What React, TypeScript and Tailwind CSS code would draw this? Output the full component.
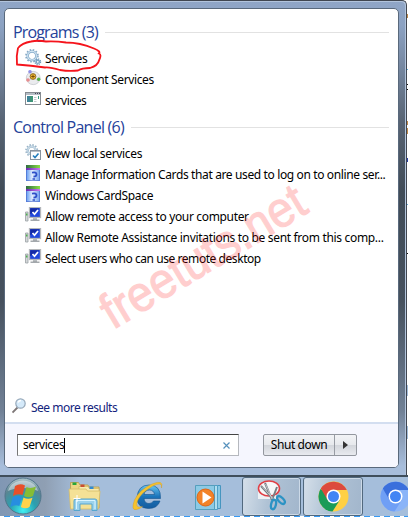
import React from "react";

const GearIcon = () => (
  <svg width="17" height="17" viewBox="0 0 17 17">
    <circle cx="7" cy="6.8" r="6" fill="none" stroke="#85a9c6" strokeWidth="1.6" strokeDasharray="1.6 1.54" />
    <circle cx="7" cy="6.8" r="4.3" fill="none" stroke="#84a9c8" strokeWidth="2.4" />
    <circle cx="7" cy="6.8" r="4.4" fill="none" stroke="#cfe4f2" strokeWidth="1.2" />
    <circle cx="12.8" cy="12.8" r="2.8" fill="none" stroke="#6f9abb" strokeWidth="1.3" strokeDasharray="1.2 1" />
    <circle cx="12.8" cy="12.8" r="1.6" fill="#fff" stroke="#7aa5c5" strokeWidth="1.4" />
  </svg>
);

const ComponentIcon = () => (
  <svg width="17" height="17" viewBox="0 0 17 17">
    <ellipse cx="8.2" cy="8" rx="6.9" ry="6.6" fill="#eaebee" stroke="#cfd2d6" />
    <path d="M3.500 11 8 7l5 4" fill="none" stroke="#d3d5da" />
    <circle cx="8" cy="6.500" r="2.900" fill="#efb92f" stroke="#7b5b1c" strokeWidth=".8" />
    <path d="M6.200 6.500h3.600M8 4.700v3.600" stroke="#70460c" strokeWidth=".9" />
    <circle cx="5" cy="1.800" r="1.800" fill="#8f8fe4" />
    <circle cx="3" cy="10" r="1.800" fill="#e88c8e" />
    <circle cx="13.700" cy="9.200" r="1.700" fill="#55b04a" />
  </svg>
);

const WindowIcon = () => (
  <svg width="17" height="17" viewBox="0 0 17 17">
    <rect x=".5" y="1.5" width="15" height="12" fill="#fff" stroke="#858b91" />
    <path d="M1 3h14" stroke="#b5bdc5" strokeWidth="2" />
    <path d="M10 2.500h1M12 2.500h1M14 2.500h1" stroke="#445" />
    <rect x="2" y="5" width="6" height="6" fill="#3f9478" />
    <path d="M2 5h3v6H2z" fill="#3f78b0" opacity=".55" />
    <path d="M9 6.500h2.500M9 8.500h2.500M9 10.500h2.500" stroke="#c3c9ce" />
    <path d="M13.500 5v3" stroke="#3a9a81" />
  </svg>
);

const LocalServicesIcon = () => (
  <svg width="17" height="17" viewBox="0 0 17 17">
    <circle cx="6.700" cy="6.500" r="5.700" fill="none" stroke="#9ab4c7" strokeWidth="1.600" strokeDasharray="1.500 1.480" />
    <circle cx="6.700" cy="6.500" r="3.900" fill="none" stroke="#a4bfd3" strokeWidth="2.400" />
    <circle cx="6.700" cy="6.500" r="4" fill="none" stroke="#d3e2ec" strokeWidth="1" />
    <rect x="5.500" y="6.500" width="10" height="9" fill="#fbfdfe" stroke="#87939e" />
    <path d="M6 7.500h9" stroke="#b4bdc6" />
    <path d="m8 11.500 2 2 3.500-4" fill="none" stroke="#227dbc" strokeWidth="1.600" />
  </svg>
);

const CardIcon = () => (
  <svg width="17" height="17" viewBox="0 0 17 17">
    <defs>
      <linearGradient id="card" x2="1">
        <stop stopColor="#5c97f2" />
        <stop offset=".45" stopColor="#e4effe" />
        <stop offset="1" stopColor="#6c9cf0" />
      </linearGradient>
      <linearGradient id="cardTop" x2="1">
        <stop stopColor="#2f6b41" />
        <stop offset="1" stopColor="#8be044" />
      </linearGradient>
      <linearGradient id="cardBand" x2="1">
        <stop stopColor="#6a2bb0" />
        <stop offset="1" stopColor="#c97bec" />
      </linearGradient>
    </defs>
    <rect x="1" y="0" width="14" height="16" fill="url(#card)" />
    <path d="M1 0h14v3H1z" fill="url(#cardTop)" />
    <path d="M1 3h14v2H1z" fill="url(#cardBand)" />
    <path d="M7 7.700q4.500-1 4.500 1.800 0 2-3 2.200" fill="none" stroke="#2f50c8" strokeWidth="1.800" />
    <path d="M7.500 14h2.500" stroke="#2f50c8" strokeWidth="1.500" />
    <path d="M1.500 5v11M14.500 5v11M1 15.500h14" stroke="#4a68c8" opacity=".6" />
  </svg>
);

const RemoteIcon = () => (
  <svg width="17" height="17" viewBox="0 0 17 17">
    <path d="M.5 5h2.500v9H.5z" fill="#d4d7d9" stroke="#9ba1a5" strokeWidth=".8" />
    <path d="M1 7.500h1.500" stroke="#4fb04f" strokeWidth="2" />
    <rect x="4.500" y=".5" width="11" height="10" fill="#2148dc" stroke="#b4b7bb" strokeWidth="1.300" />
    <path d="M5.200 1.200h9.600l-9.600 6z" fill="#142aa6" />
    <path d="M8 11.200h4V12.500h2.500V14h-9v-1.500H8z" fill="#a3a8ac" />
    <path d="m7.500 5 2 2.300L13 3" fill="none" stroke="#fff" strokeWidth="1.700" />
  </svg>
);

type Item = { icon: React.ReactNode; label: string; tracking: string };

const programs: Item[] = [
  { icon: <GearIcon />, label: "Services", tracking: "tracking-[-0.45px]" },
  { icon: <ComponentIcon />, label: "Component Services", tracking: "tracking-[-0.37px]" },
  { icon: <WindowIcon />, label: "services", tracking: "tracking-[-0.45px]" },
];

const controls: Item[] = [
  { icon: <LocalServicesIcon />, label: "View local services", tracking: "tracking-[-0.33px]" },
  { icon: <CardIcon />, label: "Manage Information Cards that are used to log on to online ser...", tracking: "tracking-[-0.37px]" },
  { icon: <CardIcon />, label: "Windows CardSpace", tracking: "tracking-[-0.35px]" },
  { icon: <RemoteIcon />, label: "Allow remote access to your computer", tracking: "tracking-[-0.34px]" },
  { icon: <RemoteIcon />, label: "Allow Remote Assistance invitations to be sent from this comp...", tracking: "tracking-[-0.32px]" },
  { icon: <RemoteIcon />, label: "Select users who can use remote desktop", tracking: "tracking-[-0.44px]" },
];

function Section({ title, tracking, items }: { title: string; tracking: string; items: Item[] }) {
  return (
    <section>
      <div className="flex h-[26px] items-center gap-[7px] pl-[8px] pr-[9px]">
        <h2 className={`whitespace-nowrap font-['Open_Sans','Noto_Sans',sans-serif] text-[16px] leading-[22px] text-[#25429a] ${tracking}`}>{title}</h2>
        <div className="h-px flex-1 bg-[#e2e2e2]" />
      </div>
      <ul className="pl-[20px] pt-[2px]">
        {items.map((it) => (
          <li key={it.label} className="flex h-[21px] items-center gap-[3px]">
            <span className="h-[17px] w-[17px] shrink-0">{it.icon}</span>
            <span className={`whitespace-nowrap pt-[3px] text-[12px] leading-[18px] text-black ${it.tracking}`}>{it.label}</span>
          </li>
        ))}
      </ul>
    </section>
  );
}

const StartOrb = () => (
  <svg width="38" height="38" viewBox="0 0 38 38">
    <defs>
      <radialGradient id="orb" cx=".5" cy=".9" r=".9">
        <stop stopColor="#3ff0f2" />
        <stop offset=".4" stopColor="#2aa0b0" />
        <stop offset=".75" stopColor="#5b8592" />
        <stop offset="1" stopColor="#b5cad0" />
      </radialGradient>
    </defs>
    <circle cx="19" cy="19" r="18" fill="url(#orb)" stroke="#51758b" />
    <path d="M4 14C8 0 30 0 34 14c-8-4-22-4-30 0" fill="#eef4f5" opacity=".5" />
    <path d="M11 9q5-3 10-.5L18.500 18q-5-2-9.500 1z" fill="#e8502a" />
    <path d="M22.500 10q4.500 2 9.500-.5L29 19q-4.500 2.500-9 0z" fill="#86bd35" />
    <path d="M8.500 20.500q4.500-3 9.500-.5l-2.700 9q-4.300-2-9 1z" fill="#278ee0" />
    <path d="M19.500 20.500q4.500 2.500 9 .2L25.500 30q-4 2.500-8.700 0z" fill="#ffd34b" />
  </svg>
);

const FolderIcon = () => (
  <svg width="34" height="32" viewBox="0 0 34 32">
    <path d="M2.500 3V1.500h8L12 4h8l1 2h10v21H3z" fill="#ecd684" stroke="#b99b46" strokeWidth=".8" />
    <path d="M11 5.500h9l1.500 2H31V24H11z" fill="#f7e9ae" stroke="#d0b45e" strokeWidth=".7" />
    <path d="M4.500 1.500h4v2.500h-4z" fill="#26a639" />
    <path d="M12.500 3.500h4V6h-4z" fill="#c94e30" />
    <path d="M21.500 5.500h4V8h-4z" fill="#338bd3" />
    <path d="M1 8h17l1.500 2H32l-1.500 18H2.500z" fill="#f4e196" stroke="#d6bc68" strokeWidth=".8" />
    <path d="M6 29.500V20q0-2 2-2h19q2 0 2 2v9.500h-5V23H12v6.500z" fill="#9bd2ec" stroke="#56a5ce" />
    <path d="M8 19.500h19M8.500 20v8M27 20v8" stroke="#d9f4ff" />
    <path d="M9 14v7M5.500 17.500h7" stroke="#fff" strokeWidth="1" />
  </svg>
);

const ExplorerIcon = () => (
  <svg width="32" height="32" viewBox="0 0 32 32">
    <defs>
      <linearGradient id="ie" x2="0" y2="1">
        <stop stopColor="#69c8f3" />
        <stop offset=".5" stopColor="#1a73b9" />
        <stop offset="1" stopColor="#145c9f" />
      </linearGradient>
    </defs>
    <path d="M28.500 18.500H12q.5 5 5 5 3 0 4.500-2.500h6.500Q25.500 28.500 16.500 28.500 5 28 5 17.500 6 5 17 5q12 0 11.500 13.500zM12 14.500h10.500q-.8-4.500-5-4.500-4.700 0-5.500 4.500z" fill="url(#ie)" stroke="#12518b" strokeWidth=".6" />
    <path d="M29.500 8Q32-1 20 4 7 10 2.500 20q-4 11 2 9.500 3-.5 6-3-4.500 1.500-5.500-.5-1.500-5 6-13Q22 3.500 28 4q2 .5 1.500 4z" fill="#f6c22e" stroke="#d39b19" strokeWidth=".4" />
  </svg>
);

const MediaIcon = () => (
  <svg width="28" height="28" viewBox="0 0 28 28">
    <path d="M6 1.500h19.500v23H6z" fill="#88c8e5" stroke="#4695bf" />
    <path d="M4 1.500h18.500v24H4z" fill="#b0def0" stroke="#519fc5" />
    <path d="M.5 1.500h19v24H.5z" fill="#8ccae5" stroke="#559fbd" />
    <circle cx="10.500" cy="13.500" r="8.500" fill="#f38328" stroke="#e26412" />
    <path d="m7.500 7.500 9 6-9 6z" fill="#fff" />
  </svg>
);

const SnipIcon = () => (
  <svg width="34" height="34" viewBox="0 0 34 34">
    <path d="M3 7h18v13H3z" fill="#eef1f4" />
    <ellipse cx="14" cy="9.500" rx="10.500" ry="7.500" fill="#f7f8f9" stroke="#e13f45" strokeWidth="1.600" />
    <path d="m6 7 13 14M10 4l7 17M22 8l-5 13" stroke="#777e84" strokeWidth="2" />
    <path d="m7 7.500 12 13M10.500 5 17 20" stroke="#dce0e3" strokeWidth=".7" />
    <ellipse cx="18.500" cy="25.500" rx="2.400" ry="4.800" transform="rotate(12 18.500 25.500)" fill="none" stroke="#2c93c4" strokeWidth="2.300" />
    <ellipse cx="26" cy="21" rx="2.400" ry="4.800" transform="rotate(-45 26 21)" fill="none" stroke="#2c93c4" strokeWidth="2.300" />
  </svg>
);

function ChromeIcon({ top, left, right }: { top: string; left: string; right: string }) {
  return (
    <svg width="31" height="31" viewBox="0 0 31 31" className="shrink-0">
      <circle cx="15.500" cy="15.500" r="15" fill={right} />
      <path d="M15.500 15.500 2.500 8A15 15 0 0 0 14.500 30.500l7-11z" fill={left} />
      <path d="M2.800 7.500A15 15 0 0 1 28.800 9H15.500L9.500 19z" fill={top} />
      <circle cx="15.500" cy="15.500" r="7" fill="#fff" />
      <circle cx="15.500" cy="15.500" r="5.500" fill="#4285f4" />
    </svg>
  );
}

export default function App() {
  return (
    <div className="relative h-[517px] w-[408px] overflow-hidden bg-white font-['Noto_Sans','Open_Sans',sans-serif]">
      <div className="h-[475px] w-[407px] rounded-tr-[5px] border-r border-t border-[#414751] bg-[linear-gradient(to_bottom,#90a6c7_0px,#8ca2c2_25px,#586474_120px,#414c58_190px,#46515e_300px,#718196_410px,#a7bddb_465px)] pl-[4px] pr-[8px] pt-[7px] shadow-[inset_-1px_1px_#b2c4dc]">
        <div className="flex h-[460px] w-[395px] flex-col overflow-hidden rounded-[5px] border border-[#59697c] bg-white">
          <div className="h-[413px] pt-[10px]">
            <Section title="Programs (3)" tracking="tracking-[-0.85px]" items={programs} />
            <div className="h-[4px]" />
            <Section title="Control Panel (6)" tracking="tracking-[-0.75px]" items={controls} />
            <div className="mt-[128px] flex h-[21px] items-center gap-[4px] pl-[7px]">
              <svg width="15" height="17" viewBox="0 0 15 17">
                <path d="m.5 14.500 5-5" stroke="#7e7777" strokeWidth="1.800" />
                <circle cx="8.500" cy="5.500" r="4.700" fill="#d5eafa" stroke="#97a9ba" strokeWidth="1.200" />
                <path d="M6 4.500q1-2 3-2" stroke="#fff" fill="none" strokeWidth="1.500" />
              </svg>
              <span className="whitespace-nowrap pt-[3px] text-[12px] leading-[18px] tracking-[-0.5px] text-[#12247d]">See more results</span>
            </div>
          </div>
          <div className="flex flex-1 items-start border-t-2 border-[#d3def0] bg-[#f5f6fe] pl-[12px] pt-[10px]">
            <div className="flex h-[22px] w-[222px] items-center border border-[#b5b8be] border-l-[#777] border-t-[#444] bg-white pl-[5px] pr-[7px]">
              <span className="text-[12px] leading-[20px] tracking-[-0.47px] text-black">services</span>
              <span className="h-[15px] w-px bg-black" />
              <svg className="ml-auto" width="9" height="9" viewBox="0 0 9 9">
                <path d="m1.500 1.500 6 6m0-6-6 6" stroke="#5691bc" strokeWidth="1.200" />
              </svg>
            </div>
            <div className="ml-[24px] flex h-[22px] w-[94px] rounded-[2px] border border-[#93979f] bg-[linear-gradient(#f2f3f6_0%,#e7e9ed_48%,#d2d5db_50%,#e8eaef_100%)]">
              <div className="flex w-[71px] items-center justify-center border-r border-[#989ca4] text-[12px] tracking-[-0.4px] text-black"><span className="whitespace-nowrap">Shut down</span></div>
              <div className="flex flex-1 items-center justify-center">
                <svg width="5" height="8" viewBox="0 0 5 8"><path d="M0 0v8l5-4z" fill="#333" /></svg>
              </div>
            </div>
          </div>
        </div>
      </div>
      <div className="flex h-[42px] w-full flex-col border-t-2 border-[#3f4e5b] bg-[#a5bedb]">
        <div className="flex h-[39px] bg-[linear-gradient(to_right,#8097b4_0px,#8f9fb3_45px,#a5bedb_80px)]">
          <div className="w-[62px] shrink-0 pl-[4px]"><StartOrb /></div>
          <div className="w-[70px] shrink-0 pl-[6px] pt-[4px]"><FolderIcon /></div>
          <div className="w-[61px] shrink-0 pt-[3px]"><ExplorerIcon /></div>
          <div className="w-[49px] shrink-0 pl-[2px] pt-[7px]"><MediaIcon /></div>
          <div className="flex w-[59px] shrink-0 justify-center rounded-[3px] border border-[#52697e] bg-[linear-gradient(100deg,#d5dfe9,#afc2d5_45%,#a2b6cc)] pt-[1px] shadow-[inset_0_0_0_1px_#ccd9e7]"><SnipIcon /></div>
          <div className="ml-[2px] flex w-[60px] shrink-0 justify-center rounded-[3px] border border-[#52697e] bg-[linear-gradient(100deg,#d5dfe9,#afc2d5_45%,#a2b6cc)] pt-[3px] shadow-[inset_0_0_0_1px_#ccd9e7]"><ChromeIcon top="#dc4a3e" left="#199b58" right="#ffd044" /></div>
          <div className="ml-[17px] shrink-0 pt-[4px]"><ChromeIcon top="#3b6fdc" left="#6f9ff5" right="#8ab4f8" /></div>
        </div>
        <div className="h-px bg-[repeating-linear-gradient(to_right,#fff_0_4px,#3699f3_4px_10px)]" />
      </div>
      <svg className="pointer-events-none absolute left-0 top-0" width="408" height="517">
        <path d="M18 48Q22 43 31 41.500 38 40 46 41.500q10-.5 20 1 14 0 28 6 7 3 5 5 3 1 0 7-1 5-9 7.500-8 0-12 2.500-9 1-18-.5-10-3-15-2.500-14-2-28-3-1-8 1-16.500" fill="none" stroke="#f5141c" strokeWidth="1.800" />
        <text x="113" y="330" transform="rotate(-31 113 330)" fontFamily="Liberation Sans, sans-serif" fontSize="50" fill="#f00" stroke="#f00" strokeWidth="1.200" opacity=".19" textLength="230" lengthAdjust="spacingAndGlyphs">freetuts.net</text>
        <path d="M407.500 14v4M407.500 121v4M407.500 128v6" stroke="#c08a4a" />
        <path d="M407.500 84v1M407.500 89v1M407.500 253v1" stroke="#111" />
        <path d="M407.500 158v4" stroke="#2b3fa8" />
        <path d="M407.500 69v1M407.500 204v1" stroke="#65b3dd" />
        <path d="M407.500 385v11M407.500 426v13" stroke="#a5bedb" />
      </svg>
    </div>
  );
}
